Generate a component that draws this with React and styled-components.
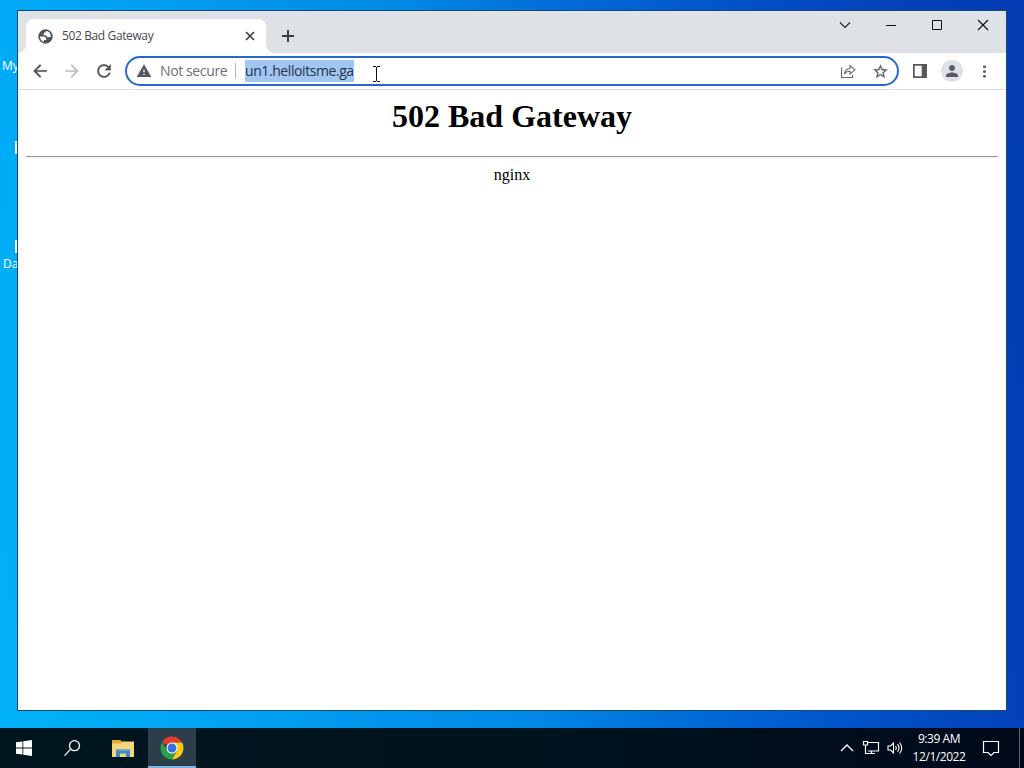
import styled, { createGlobalStyle } from "styled-components"

const GlobalStyle = createGlobalStyle`
    *{
        box-sizing: border-box;
    }

    body{
        margin: 0;
        overflow: hidden;
    }
`

const Screen = styled.div`
    width: 1024px;
    height: 768px;
    display: flex;
    flex-direction: column;
    overflow: hidden;
    font-family: 'Open Sans', 'Noto Sans', sans-serif;
`

const Desktop = styled.main`
    position: relative;
    height: 728px;
    padding: 10px 17px 17px 17px;
    background: linear-gradient(80deg, #00b2f8 0%, #00aaf6 12%, #0098ee 30%, #008ae6 45%, #0068d6 62%, #0050c8 76%, #0340b8 90%, #043cb2 100%);
`

const Shortcut = styled.div`
    position: absolute;
    left: ${props => props.$x}px;
    top: ${props => props.$y}px;
    color: white;
    font-size: 12px;
    line-height: 16px;
    white-space: nowrap;
`

const ShortcutIcon = styled(Shortcut)`
    width: 20px;
    height: 13px;
    background: #e8f4fc;
`

const Window = styled.section`
    position: relative;
    width: 990px;
    height: 701px;
    display: flex;
    flex-direction: column;
    border: 1px solid #174a72;
    background: white;
`

const TitleBar = styled.header`
    display: flex;
    height: 42px;
    padding-left: 8px;
    background: #dee1e6;
`

const Tab = styled.div`
    position: relative;
    display: flex;
    align-items: center;
    width: 240px;
    height: 34px;
    margin-top: 8px;
    padding: 0 8px 0 11px;
    border-radius: 8px 8px 0 0;
    background: white;

    &::before, &::after{
        content: '';
        position: absolute;
        bottom: 0;
        width: 8px;
        height: 8px;
    }

    &::before{
        left: -8px;
        background: radial-gradient(circle at 0 0, transparent 7.5px, white 8px);
    }

    &::after{
        right: -8px;
        background: radial-gradient(circle at 100% 0, transparent 7.5px, white 8px);
    }
`

const TabTitle = styled.span`
    flex: 1;
    margin-left: 8px;
    color: #45494d;
    font-size: 12px;
    letter-spacing: -0.38px;
    line-height: 16px;
`

const NewTab = styled.div`
    display: grid;
    place-items: center;
    width: 28px;
    height: 34px;
    margin: 8px 0 0 8px;
`

const WindowButtons = styled.div`
    display: flex;
    height: 28px;
    margin-left: auto;
`

const WindowButton = styled.div`
    display: grid;
    place-items: center;
    width: 46px;
    height: 28px;
`

const Toolbar = styled.nav`
    display: flex;
    align-items: center;
    height: 37px;
    padding: 0 6px;
    border-bottom: 1px solid #dcdde0;
`

const ToolButton = styled.div`
    display: grid;
    place-items: center;
    width: 32px;
    height: 36px;
`

const Avatar = styled.div`
    display: grid;
    place-items: center;
    width: 22px;
    height: 22px;
    border-radius: 50%;
    background: #dee1e6;
`

const AddressBar = styled.div`
    display: flex;
    align-items: center;
    width: 774px;
    height: 30px;
    margin: 0 5px;
    padding: 0 1px 0 9px;
    border: 2px solid #2868c8;
    border-radius: 15px;
    font-size: 14px;
    line-height: 20px;
`

const Security = styled.span`
    width: 68px;
    margin-left: 8px;
    color: #6c7075;
    letter-spacing: -0.38px;
    white-space: nowrap;
`

const Divider = styled.i`
    width: 1px;
    height: 16px;
    margin: 0 9px 0 7px;
    background: #b4b7bb;
`

const Url = styled.span`
    height: 22px;
    width: 109px;
    margin-right: auto;
    background: #a2c5f2;
    color: #21374f;
    letter-spacing: -0.42px;
    line-height: 22px;
    white-space: nowrap;
`

const Page = styled.article`
    padding: 8px;
    font-family: 'Liberation Serif', serif;
    color: black;
    text-align: center;

    h1{
        margin: 0 0 21px 0;
        font-size: 32px;
        line-height: 37px;
    }

    hr{
        height: 2px;
        margin: 0 0 8px 0;
        border: solid;
        border-width: 1px 0;
        border-color: #98989c #f0f0f0 #f0f0f0;
    }

    p{
        margin: 0;
        font-size: 16px;
        line-height: 18px;
    }
`

const TextCursor = styled.svg`
    position: absolute;
    left: 354px;
    top: 54px;
`

const Taskbar = styled.footer`
    display: flex;
    height: 40px;
    background: linear-gradient(90deg, #00161f 0%, #00141e 50%, #000d1c 80%, #000a1a 100%);
    color: white;
`

const TaskButton = styled.div`
    display: grid;
    place-items: center;
    width: 48px;
    height: 40px;
    margin-left: ${props => props.$gap || 0}px;
    background: ${props => props.$active ? '#2c3e49' : 'none'};
    box-shadow: ${props => props.$active ? 'inset 0 -2px #7ab4e8' : 'none'};
`

const Tray = styled.div`
    display: flex;
    align-items: center;
    margin-left: auto;
`

const TrayIcon = styled.div`
    display: grid;
    place-items: center;
    width: ${props => props.$w || 24}px;
    height: 40px;
`

const Clock = styled.div`
    width: 64px;
    font-size: 12px;
    line-height: 18px;
    letter-spacing: -0.45px;
    text-align: center;
    white-space: nowrap;
`

const ShowDesktop = styled.div`
    width: 5px;
    height: 40px;
    border-left: 1px solid #58626c;
`

const Glyph = ({ d, size = 20, color = '#5f6368', bold = 0 }) => (
    <svg width={size} height={size} viewBox="0 0 24 24" fill={color} stroke={color} strokeWidth={bold}><path d={d} /></svg>
)

const Line = ({ d, w = 16, h = 16, color = 'white', width = 1 }) => (
    <svg width={w} height={h} viewBox={`0 0 ${w} ${h}`} fill="none" stroke={color} strokeWidth={width}><path d={d} /></svg>
)

const back = "M20 11H7.83l5.59-5.59L12 4l-8 8 8 8 1.41-1.41L7.83 13H20v-2z"
const forward = "M12 4l-1.41 1.41L16.17 11H4v2h12.17l-5.58 5.59L12 20l8-8z"
const reload = "M17.65 6.35A7.958 7.958 0 0 0 12 4c-4.42 0-7.99 3.58-7.99 8s3.57 8 7.99 8c3.73 0 6.84-2.55 7.73-6h-2.08A5.99 5.99 0 0 1 12 18c-3.31 0-6-2.69-6-6s2.69-6 6-6c1.66 0 3.14.69 4.22 1.78L13 11h7V4l-2.35 2.35z"
const warning = "M1 21h22L12 2 1 21zm12-3h-2v-2h2v2zm0-4h-2v-4h2v4z"
const star = "M22 9.24l-7.19-.62L12 2 9.19 8.63 2 9.24l5.46 4.73L5.82 21 12 17.27 18.18 21l-1.63-7.03L22 9.24zM12 15.4l-3.76 2.27 1-4.28-3.32-2.88 4.38-.38L12 6.1l1.71 4.04 4.38.38-3.32 2.88 1 4.28L12 15.4z"
const person = "M12 12c2.21 0 4-1.79 4-4s-1.79-4-4-4-4 1.79-4 4 1.79 4 4 4zm0 2c-2.67 0-8 1.34-8 4v2h16v-2c0-2.66-5.33-4-8-4z"
const dots = "M12 8c1.1 0 2-.9 2-2s-.9-2-2-2-2 .9-2 2 .9 2 2 2zm0 2c-1.1 0-2 .9-2 2s.9 2 2 2 2-.9 2-2-.9-2-2-2zm0 6c-1.1 0-2 .9-2 2s.9 2 2 2 2-.9 2-2-.9-2-2-2z"

const Globe = () => (
    <svg width="17" height="17" viewBox="0 0 17 17">
        <circle cx="8.5" cy="8.5" r="7.2" fill="#505458" />
        <path fill="white" d="M3 8.6h3.2c2.2 0 3.3 1.2 3.1 3.4H6.9v2C4.6 13.3 3 11.2 3 8.6zM9.3 3c-.5.3-.6.8-.6 1.3-1.5 0-2.2 1-2 2.9h2.6c0 1.4.8 2 2.3 2 .9 0 1.6-.3 2.3-.8C13.9 5.6 12 3.4 9.3 3z" />
    </svg>
)

const ChromeLogo = () => (
    <svg width="24" height="24" viewBox="0 0 24 24">
        <path fill="#e33b2e" d="M12 12 2.04 6.25A11.5 11.5 0 0 1 21.96 6.25L12 6.7z" />
        <path fill="#fbc918" d="M12 6.6h10.15A11.5 11.5 0 0 1 11.9 23.5l4.9-8.4z" />
        <path fill="#2da04d" d="M2.04 6.25 7.3 15.1l5 2.1-.9 6.28A11.5 11.5 0 0 1 2.04 6.25zM7.3 14.7l9.4.2-4.9 8.6-3-.5z" />
        <circle cx="12" cy="12" r="5.6" fill="white" />
        <circle cx="12" cy="12" r="4.5" fill="#3474e0" />
    </svg>
)

const FolderLogo = () => (
    <svg width="22" height="19" viewBox="0 0 22 19">
        <path fill="#e5a92e" d="M0 1h8.5l1.5 2h12v15H0z" />
        <path fill="#f5d67c" d="M0 4.5h8.5L10 2.5h12V18H0z" />
        <path fill="#3d8cc4" d="M4 10.5h14V18h-4v-3.5H8V18H4z" />
        <path fill="#5ba6d4" d="M4 10.5h14v1.5H4z" />
    </svg>
)

export default function App() {
    return (
        <Screen>
            <GlobalStyle />
            <Desktop>
                <Shortcut $x={2} $y={58}>My</Shortcut>
                <ShortcutIcon $x={15} $y={141} />
                <ShortcutIcon $x={15} $y={240} />
                <Shortcut $x={3} $y={256}>Da</Shortcut>
                <Window>
                    <TitleBar>
                        <Tab>
                            <Globe />
                            <TabTitle>502 Bad Gateway</TabTitle>
                            <Line d="M4 4l8 8M12 4l-8 8" color="#3c4043" width={1.7} />
                        </Tab>
                        <NewTab><Line d="M8 2v12M2 8h12" color="#3c4043" width={2} /></NewTab>
                        <WindowButtons>
                            <WindowButton><Line d="M3 5.5l5 5 5-5" color="#222" width={1.1} /></WindowButton>
                            <WindowButton><Line d="M3 8.5h10" color="#111" /></WindowButton>
                            <WindowButton><Line d="M3.5 3.5h9v9h-9z" color="#111" /></WindowButton>
                            <WindowButton><Line d="M3 3l10 10M13 3L3 13" color="#111" width={1.1} /></WindowButton>
                        </WindowButtons>
                    </TitleBar>
                    <Toolbar>
                        <ToolButton><Glyph d={back} color="#505458" bold={0.3} /></ToolButton>
                        <ToolButton><Glyph d={forward} color="#bdc0c3" bold={0.2} /></ToolButton>
                        <ToolButton><Glyph d={reload} color="#505458" bold={0.3} /></ToolButton>
                        <AddressBar>
                            <Glyph d={warning} size={16} color="#55595e" />
                            <Security>Not secure</Security>
                            <Divider />
                            <Url>un1.helloitsme.ga</Url>
                            <ToolButton>
                                <Line d="M1.6 4.5v10h11V12M10 5.5V2.6l5 4.2-5 4.2V8.3C7.5 8.2 5.800 9 4.5 11c.3-3.2 2.2-5.2 5.5-5.5z" color="#65696d" width={1.1} />
                            </ToolButton>
                            <ToolButton><Glyph d={star} size={17} bold={0.4} /></ToolButton>
                        </AddressBar>
                        <ToolButton>
                            <svg width="14" height="14" viewBox="0 0 14 14" fill="#55595e"><path fillRule="evenodd" d="M0 0h14v14H0zM1.7 1.7v10.6h7V1.7z" /></svg>
                        </ToolButton>
                        <ToolButton><Avatar><Glyph d={person} size={18} color="#55596a" /></Avatar></ToolButton>
                        <ToolButton><Glyph d={dots} size={19} /></ToolButton>
                    </Toolbar>
                    <Page>
                        <h1>502 Bad Gateway</h1>
                        <hr />
                        <p>nginx</p>
                    </Page>
                    <TextCursor width="10" height="18" viewBox="0 0 10 18" fill="none" stroke="#111">
                        <path d="M1 1.5h3M5 1.5h3M4.5 2v14M1 16.5h3M5 16.5h3" />
                    </TextCursor>
                </Window>
            </Desktop>
            <Taskbar>
                <TaskButton>
                    <svg width="16" height="16" viewBox="0 0 16 16" fill="white"><path d="M0 2.3l6.5-.9v6.2H0zM7.3 1.3L16 0v7.6H7.3zM0 8.4h6.5v6.2L0 13.7zM7.3 8.4H16V16l-8.700-1.3z" /></svg>
                </TaskButton>
                <TaskButton><Line d="M7 8.9L.5 15.6M15.5 5.7a5 5 0 1 1-10 0 5 5 0 0 1 10 0z" w={17} h={17} width={1.3} /></TaskButton>
                <TaskButton $gap={3}><FolderLogo /></TaskButton>
                <TaskButton $gap={1} $active><ChromeLogo /></TaskButton>
                <Tray>
                    <TrayIcon><Line d="M2 11l6-6 6 6" width={1.4} /></TrayIcon>
                    <TrayIcon><Line d="M5.5 2.5h11v8.5H6M1.5 1.5h4v3.5h-4zM3.5 5v9M3.5 13.5h9.5M9.5 11v2.5" w={18} width={1.2} /></TrayIcon>
                    <TrayIcon><Line d="M1 6h2.5l3-3v10l-3-3H1zM8.5 6q1.5 2 0 4M10.5 4.2q3 3.8 0 7.6M12.5 2.5q4.5 5.5 0 11" w={17} width={1.1} /></TrayIcon>
                    <Clock>
                        <div>9:39 AM</div>
                        <div>12/1/2022</div>
                    </Clock>
                    <TrayIcon $w={40}><Line d="M1.5 1.5h15v11h-4.5l-3 3-3-3H1.5z" w={18} h={17} width={1.2} /></TrayIcon>
                    <TrayIcon $w={8} />
                    <ShowDesktop />
                </Tray>
            </Taskbar>
        </Screen>
    )
}
